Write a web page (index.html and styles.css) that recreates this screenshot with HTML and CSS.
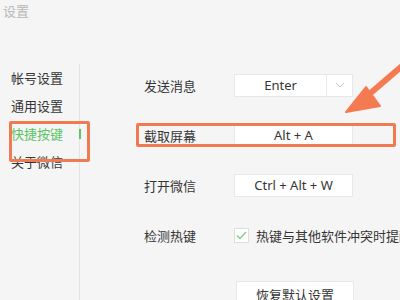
FILE: index.html
```html
<!DOCTYPE html>
<html lang="zh-CN">
<head>
    <meta charset="UTF-8">
    <meta name="viewport" content="width=device-width, initial-scale=1.0">
    <title>设置</title>
    <link rel="stylesheet" href="styles.css">
</head>
<body>
    <div class="window">
        <div class="title">设置</div>
        <div class="main">
            <ul class="sidebar">
                <li>帐号设置</li>
                <li>通用设置</li>
                <li class="active">快捷按键</li>
                <li>关于微信</li>
            </ul>
            <div class="content">
                <div class="row">
                    <span class="label">发送消息</span>
                    <div class="field select">
                        <span class="value">Enter</span>
                        <span class="arrow">
                            <svg width="10" height="6" viewBox="0 0 10 6"><polyline points="1,1 5,5 9,1" fill="none" stroke="#c8c8c8" stroke-width="1"/></svg>
                        </span>
                    </div>
                </div>
                <div class="row">
                    <span class="label">截取屏幕</span>
                    <div class="field">Alt + A</div>
                </div>
                <div class="row">
                    <span class="label">打开微信</span>
                    <div class="field">Ctrl + Alt + W</div>
                </div>
                <div class="row">
                    <span class="label">检测热键</span>
                    <span class="checkbox">
                        <svg width="11" height="9" viewBox="0 0 11 9"><polyline points="1,4.5 4,7.5 10,1" fill="none" stroke="#7fcf8a" stroke-width="1.3"/></svg>
                    </span>
                    <span class="check-text">热键与其他软件冲突时提醒</span>
                </div>
                <button class="reset">恢复默认设置</button>
            </div>
        </div>

        <!-- annotation marks -->
        <div class="mark mark-menu"></div>
        <div class="mark mark-row"></div>
        <svg class="pointer" width="400" height="300" viewBox="0 0 400 300">
            <line x1="402" y1="66" x2="366" y2="97" stroke="#f47a52" stroke-width="6" stroke-linecap="round"/>
            <polygon points="346,112 366,87 380,106" fill="#f47a52" stroke="#f47a52" stroke-width="2" stroke-linejoin="round"/>
        </svg>
    </div>
</body>
</html>
```

FILE: styles.css
```css
body {
    margin: 0;
    background: #f5f5f5;
    font-family: "Noto Sans", "Noto Sans CJK SC", sans-serif;
    font-size: 13px;
    color: #353535;
}
.window {
    position: relative;
    width: 400px;
    height: 300px;
    overflow: hidden;
}
.title {
    height: 20px;
    padding: 1px 0 0 3px;
    color: #b8b8b8;
    line-height: 20px;
}
.main {
    display: flex;
    margin-top: 43px;
}
.sidebar {
    flex: none;
    list-style: none;
    margin: 0;
    padding: 0;
    width: 79px;
    height: 240px;
    border-right: 1px solid #e4e4e4;
}
.sidebar li {
    position: relative;
    height: 28px;
    line-height: 28px;
    padding-left: 11px;
}
.sidebar li.active {
    color: #5cc466;
}
.sidebar li.active::after {
    content: "";
    position: absolute;
    right: -2px;
    top: 9px;
    width: 2px;
    height: 10px;
    background: #5cc466;
}
.content {
    flex: none;
    padding-left: 64px;
    margin-top: -4px;
}
.row {
    display: flex;
    align-items: center;
    height: 50px;
}
.label {
    flex: none;
    width: 90px;
}
.field {
    flex: none;
    box-sizing: border-box;
    width: 119px;
    height: 23px;
    background: #fff;
    border: 1px solid #e8e8e8;
    text-align: center;
    line-height: 21px;
}
.select {
    display: flex;
}
.select .value {
    flex: 1;
}
.select .arrow {
    width: 25px;
    border-left: 1px solid #e8e8e8;
    display: flex;
    align-items: center;
    justify-content: center;
}
.checkbox {
    flex: none;
    box-sizing: border-box;
    width: 15px;
    height: 15px;
    background: #fff;
    border: 1px solid #dedede;
    display: flex;
    align-items: center;
    justify-content: center;
}
.check-text {
    margin-left: 7px;
    white-space: nowrap;
}
.reset {
    display: block;
    margin-top: 21px;
    margin-left: 92px;
    width: 118px;
    height: 26px;
    background: #fff;
    border: 1px solid #e8e8e8;
    font-family: inherit;
    font-size: 13px;
    color: #353535;
    padding: 0;
}
.mark {
    position: absolute;
    box-sizing: border-box;
    border: 3px solid #f07a52;
    border-radius: 2px;
}
.mark-menu {
    left: 9px;
    top: 121px;
    width: 81px;
    height: 41px;
}
.mark-row {
    left: 136px;
    top: 123px;
    width: 260px;
    height: 24px;
}
.pointer {
    position: absolute;
    left: 0;
    top: 0;
}
```
